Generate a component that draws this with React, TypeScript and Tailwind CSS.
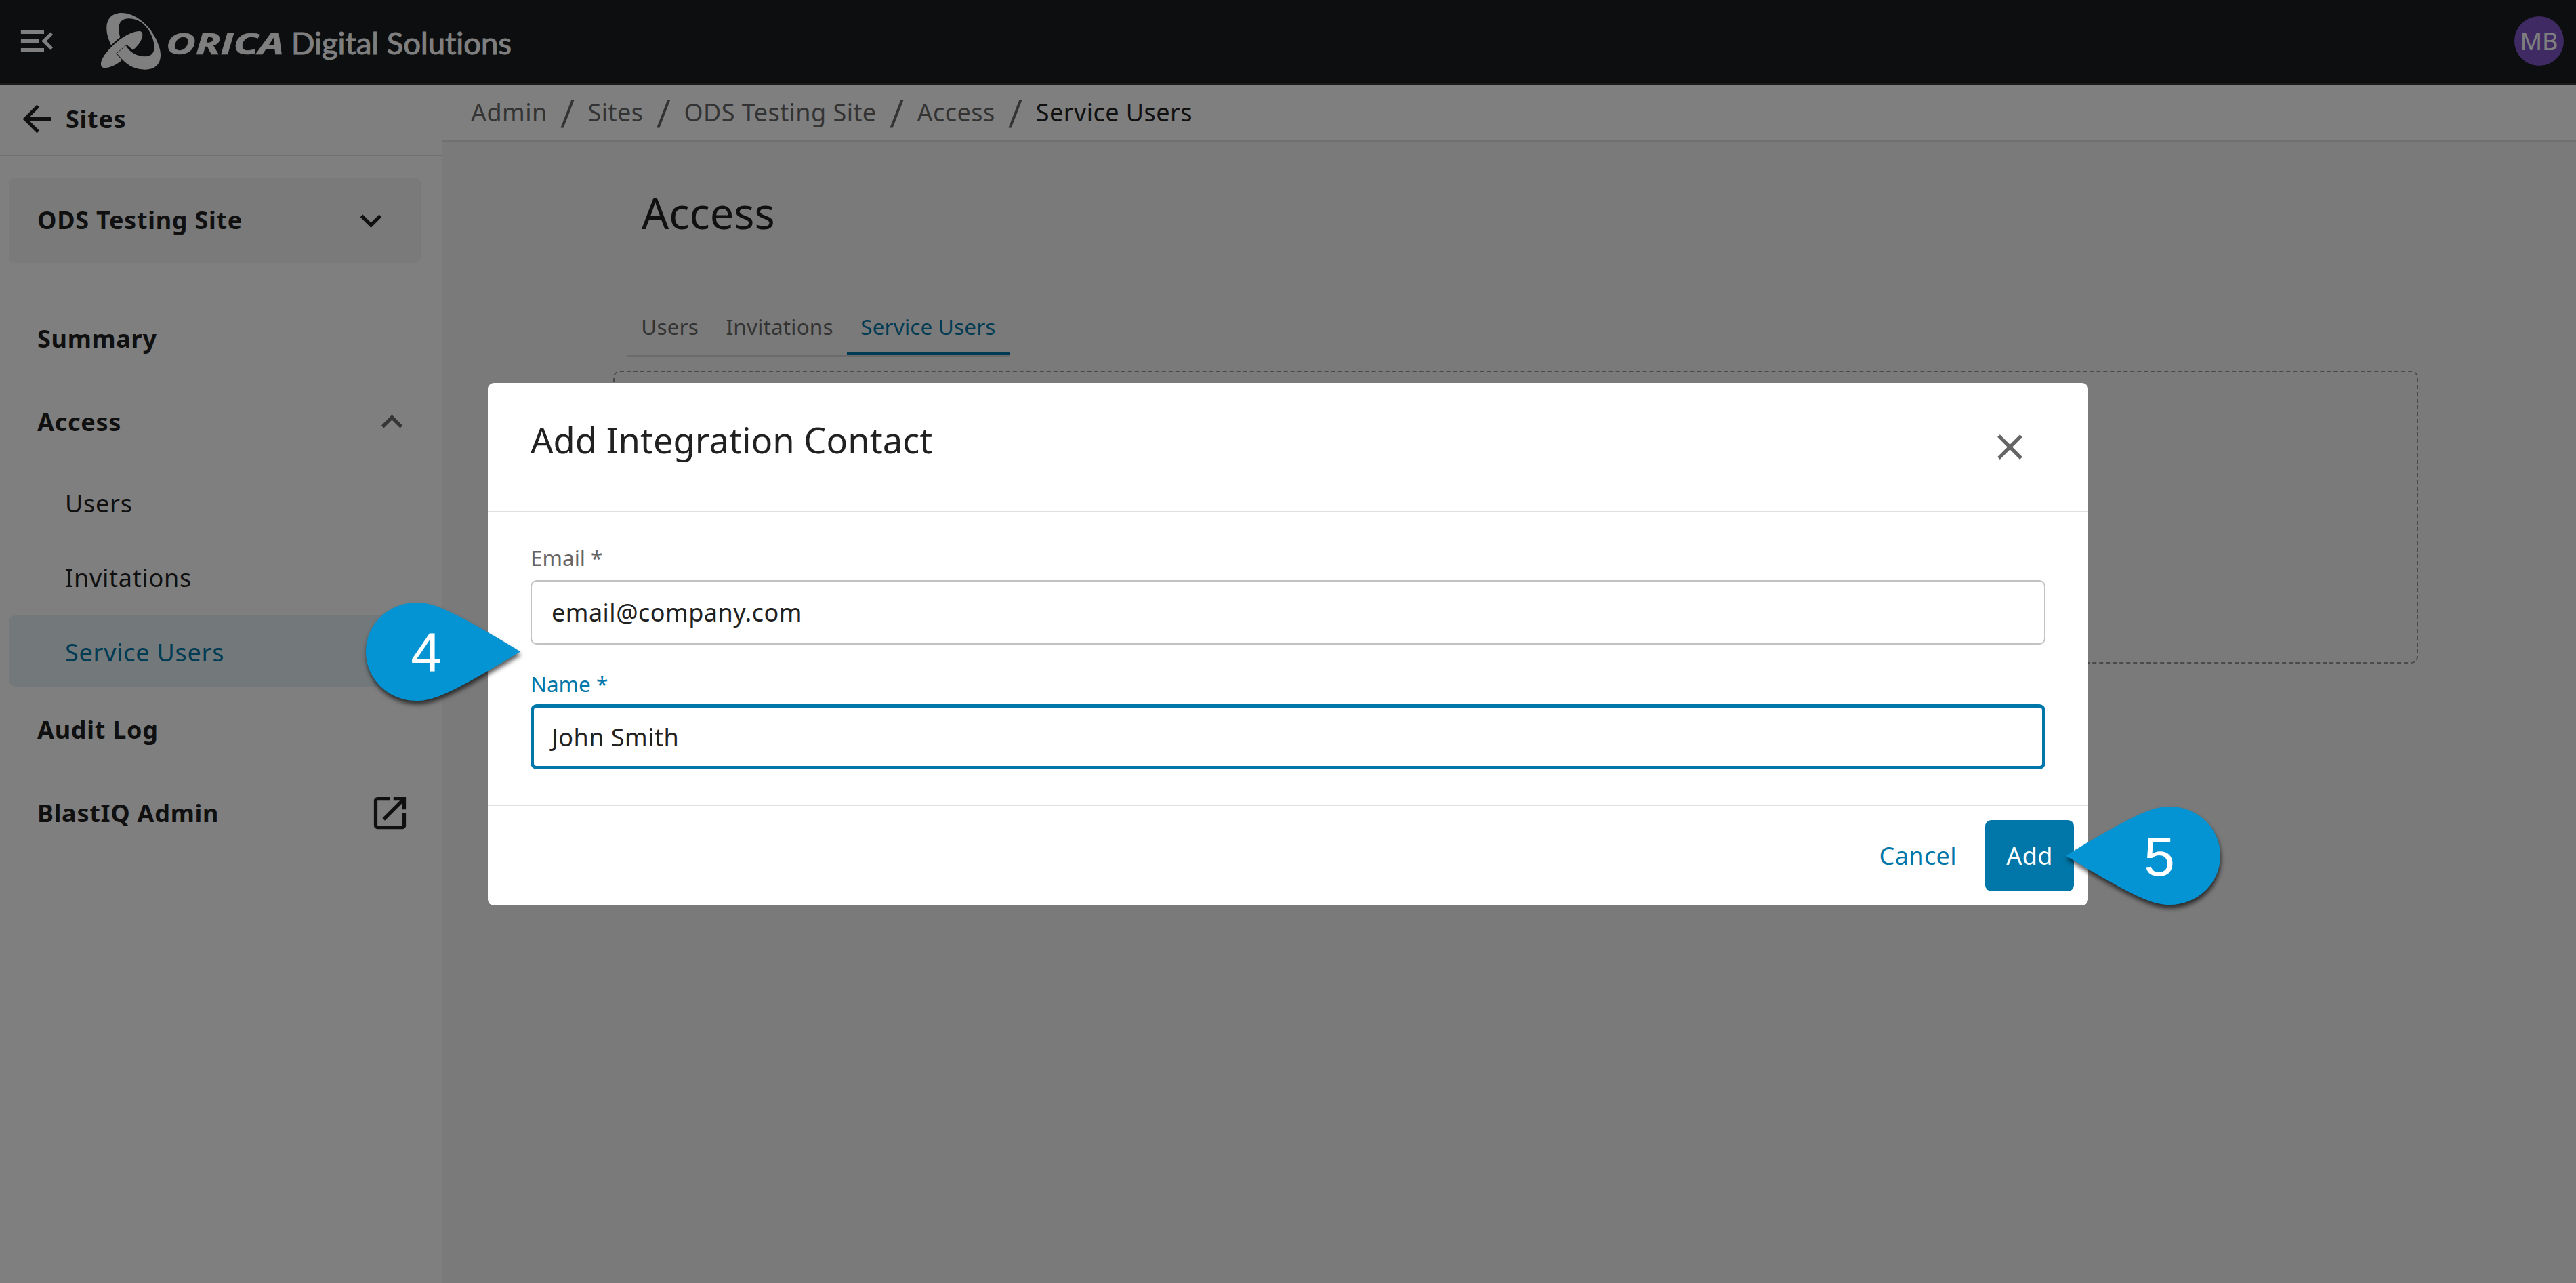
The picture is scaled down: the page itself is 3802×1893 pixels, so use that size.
import React from 'react'
import {
  MdArrowBack,
  MdClose,
  MdExpandLess,
  MdExpandMore,
  MdMenuOpen,
  MdOpenInNew
} from 'react-icons/md'

const breadcrumbs = ['Admin', 'Sites', 'ODS Testing Site', 'Access', 'Service Users']
const accessLinks = ['Users', 'Invitations', 'Service Users']
const tabs = ['Users', 'Invitations', 'Service Users']

const Logo: React.FC = () => (
  <svg width="620" height="120" viewBox="0 0 620 120" fill="white">
    <g transform="scale(0.33333)">
      <path d="M72 197C60 168 52 148 52 122C52 80 76 54 118 54C178 54 240 106 270 168C284 198 291 220 291 240C291 281 266 305 222 305C183 305 150 290 123 262L97 233L138 199C152 228 186 247 222 247C249 247 263 232 263 205C263 172 244 130 216 104C196 87 174 79 150 79C121 79 106 95 106 124C106 140 108 150 112 162C98 173 84 185 72 197Z" />
      <path d="M27 282C27 250 66 208 112 171C145 147 176 135 197 135C206 135 211 141 211 151C211 171 195 196 169 219L141 194L94 233L120 263C92 286 66 297 42 297C32 297 27 292 27 282Z" />
    </g>
    <text
      x="105"
      y="79"
      fontSize="43.5"
      fontWeight="700"
      fontStyle="italic"
      stroke="white"
      strokeWidth="0.6"
      textLength="174"
      lengthAdjust="spacingAndGlyphs"
      className="font-['Open_Sans',sans-serif]"
    >
      ORICA
    </text>
    <text
      x="290"
      y="79"
      fontSize="43.5"
      stroke="white"
      strokeWidth="1"
      textLength="325"
      lengthAdjust="spacingAndGlyphs"
      className="font-['Lato',sans-serif] [font-variant-ligatures:none]"
    >
      Digital Solutions
    </text>
  </svg>
)

const TopBar: React.FC = () => (
  <header className="flex h-[125px] shrink-0 items-center border-b-2 border-[#363636] bg-[#1a1c1f] pr-[18px] pb-[2px] pl-[23px] text-white">
    <MdMenuOpen className="size-[63px]" />
    <div className="ml-[54px]">
      <Logo />
    </div>
    <div className="ml-auto flex size-[73px] items-center justify-center rounded-full bg-[#7e54c6] text-[36px]">
      MB
    </div>
  </header>
)

const Sidebar: React.FC = () => (
  <aside className="flex w-[653px] shrink-0 flex-col border-r border-[#e0e0e0] bg-white text-[36px] font-bold tracking-[0.72px]">
    <div className="flex h-[105px] items-center border-b-2 border-[#e0e0e0] pb-[2px] pl-[23px]">
      <MdArrowBack className="size-[63px]" />
      <span className="ml-[11px]">Sites</span>
    </div>
    <div className="mt-[32px] ml-[13px] flex h-[126px] w-[608px] items-center justify-between rounded-[9px] bg-[#f4f4f4] pr-[42px] pl-[42px]">
      <span>ODS Testing Site</span>
      <MdExpandMore className="size-[63px]" />
    </div>
    <nav className="mt-[50px] flex flex-col">
      <div className="flex h-[123px] items-center pt-[1px] pl-[55px]">Summary</div>
      <div className="flex h-[123px] items-center justify-between pr-[42px] pl-[55px]">
        <span>Access</span>
        <MdExpandLess className="size-[63px] text-[#6b6b6b]" />
      </div>
      <div className="flex flex-col gap-[5px] pt-[4px] pb-[1px] pl-[13px] font-normal tracking-[0.75px]">
        {accessLinks.map((link) => (
          <div
            key={link}
            className={`flex h-[105px] w-[608px] items-center rounded-[9px] pt-[5px] pl-[83px] ${
              link === 'Service Users' ? 'bg-[#e6f2f6] text-[#0077a8]' : ''
            }`}
          >
            {link}
          </div>
        ))}
      </div>
      <div className="flex h-[123px] items-center pt-[2px] pl-[55px]">Audit Log</div>
      <div className="flex h-[123px] items-center justify-between pt-[2px] pr-[45px] pl-[55px]">
        <span>BlastIQ Admin</span>
        <MdOpenInNew className="size-[63px]" />
      </div>
    </nav>
  </aside>
)

const Breadcrumbs: React.FC = () => (
  <div className="flex h-[84px] items-center border-b-2 border-[#e0e0e0] bg-white pl-[42px] text-[36px] tracking-[0.45px] text-[#666]">
    {breadcrumbs.map((crumb, i) => (
      <React.Fragment key={crumb}>
        {i > 0 && (
          <span className="w-[60px] pt-[1px] pl-[1px] text-center font-['Roboto',sans-serif] text-[54px] leading-[60px] tracking-normal">
            /
          </span>
        )}
        <span className={i === breadcrumbs.length - 1 ? 'text-[#212121]' : ''}>{crumb}</span>
      </React.Fragment>
    ))}
  </div>
)

const AccessPage: React.FC = () => (
  <main className="flex flex-1 flex-col bg-[#f4f4f4]">
    <Breadcrumbs />
    <h1 className="mt-[63px] ml-[294px] text-[63px] leading-[84px]">Access</h1>
    <div className="mt-[88px] ml-[273px] flex w-fit border-b-2 border-[#d6d6d6] text-[31.5px] tracking-[0.16px]">
      {tabs.map((tab) => (
        <div
          key={tab}
          className={`h-[80px] border-b-[5px] px-[20.25px] leading-[75px] ${
            tab === 'Service Users' ? 'border-[#0077a8] text-[#0077a8]' : 'border-transparent text-[#666]'
          }`}
        >
          {tab}
        </div>
      ))}
    </div>
    <div className="mt-[21px] ml-[252px] h-[432px] w-[2664px] rounded-[10px] border-2 border-dashed border-[#949494]" />
  </main>
)

interface FieldProps {
  label: string
  value: string
  focused?: boolean
}

const Field: React.FC<FieldProps> = ({ label, value, focused = false }) => (
  <label className="flex flex-col">
    <span className={`text-[31.5px] leading-[42px] ${focused ? 'text-[#0077a8]' : 'text-[#666]'}`}>{label}</span>
    <span
      className={`flex items-center rounded-[9px] pt-[1px] text-[36px] tracking-[0.48px] ${
        focused ? 'mt-[9px] h-[96px] border-[5px] border-[#0077a8] px-[26px]' : 'mt-[12px] h-[95px] border-2 border-[#c2c2c2] px-[29px]'
      }`}
    >
      {value}
    </span>
  </label>
)

const ContactDialog: React.FC = () => (
  <div className="flex h-[771px] w-[2362px] flex-col rounded-[9px] bg-white">
    <div className="flex h-[191px] items-start justify-between border-b-2 border-[#e0e0e0] pr-[84px] pl-[63px]">
      <h2 className="mt-[48px] text-[52.5px] leading-[72px]">Add Integration Contact</h2>
      <MdClose className="mt-[63px] size-[63px] text-[#666]" />
    </div>
    <div className="flex h-[433px] flex-col gap-[37px] border-b-2 border-[#e0e0e0] px-[63px] pt-[46px]">
      <Field label="Email *" value="email@company.com" />
      <Field label="Name *" value="John Smith" focused />
    </div>
    <div className="flex flex-1 items-center justify-end pr-[21px] text-[36px] tracking-[0.4px]">
      <button className="mr-[42px] text-[#0077a8]">Cancel</button>
      <button className="h-[105px] w-[131px] rounded-[9px] bg-[#0077a8] text-white">Add</button>
    </div>
  </div>
)

const Callout: React.FC<{ step: number; flipped?: boolean }> = ({ step, flipped = false }) => (
  <svg
    width="228"
    height="145"
    viewBox="0 0 228 145"
    className="overflow-visible font-['Liberation_Sans',sans-serif] drop-shadow-[1px_5px_3px_rgba(0,0,0,0.65)]"
  >
    <path
      transform={flipped ? 'translate(228 0) scale(-1 1)' : undefined}
      d="M0 72.5C0 32 33 0 75 0C98 0 122 8 228 72.5C122 137 98 145 75 145C33 145 0 113 0 72.5Z"
      fill="#0494d3"
    />
    <text x={flipped ? 138 : 89} y="101.5" fontSize="82" fill="white" textAnchor="middle">
      {step}
    </text>
  </svg>
)

const App: React.FC = () => {
  return (
    <div className="relative flex h-screen w-full flex-col overflow-hidden font-['Noto_Sans',sans-serif] text-[#212121]">
      <TopBar />
      <div className="flex flex-1">
        <Sidebar />
        <AccessPage />
      </div>

      {/* Dialog backdrop */}
      <div className="absolute inset-0 flex items-start justify-center bg-black/50 pt-[565px]">
        <ContactDialog />
      </div>

      {/* Step markers */}
      <div className="absolute top-[889px] left-[540px]">
        <Callout step={4} />
      </div>
      <div className="absolute top-[1190px] left-[3049px]">
        <Callout step={5} flipped />
      </div>
    </div>
  )
}

export default App
